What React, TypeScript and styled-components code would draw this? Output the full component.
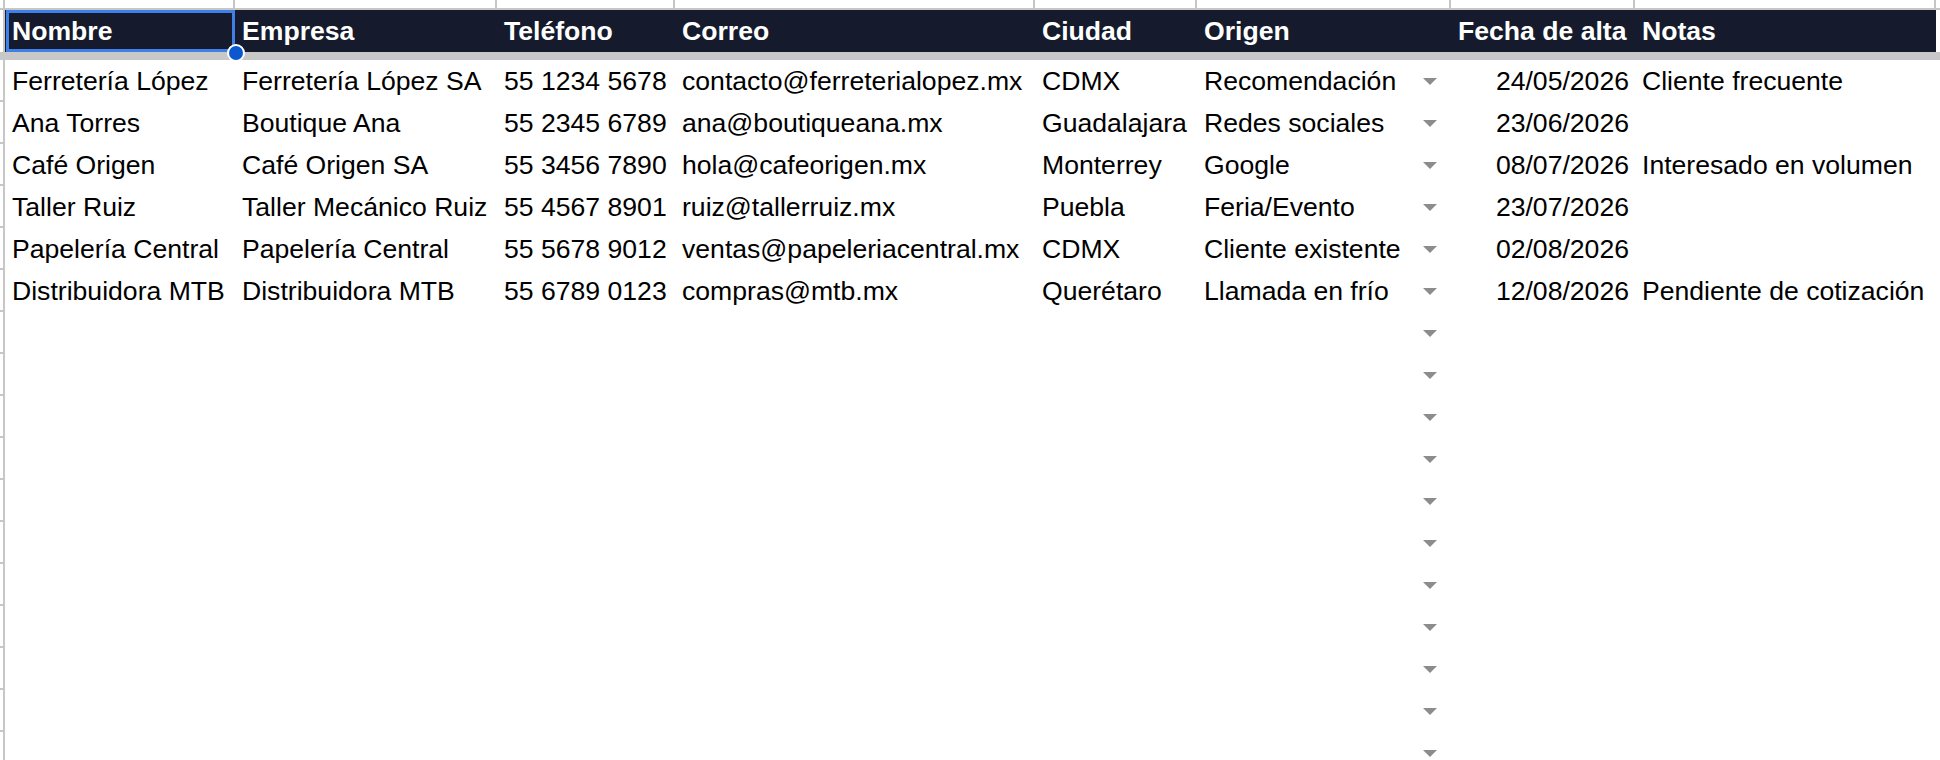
import React from "react";
import styled, { createGlobalStyle } from "styled-components";

const GlobalStyle = createGlobalStyle`
  html, body {
    margin: 0;
    padding: 0;
    background: #ffffff;
    overflow: hidden;
  }
  body {
    font-family: "Liberation Sans", Arial, sans-serif;
  }
`;

const COLS = "5px 230px 262px 178px 360px 162px 254px 184px 301px 1fr";
const LINE = "#c6c6c6";

const Sheet = styled.div`
  width: 1940px;
  height: 760px;
  overflow: hidden;
  display: flex;
  flex-direction: column;
  font-family: "Liberation Sans", Arial, sans-serif;
  font-size: 26.6px;
  color: #000;
`;

const GridRow = styled.div<{ $h: number }>`
  display: grid;
  grid-template-columns: ${COLS};
  height: ${(p) => p.$h}px;
  flex: none;
  position: relative;
`;

const RowHead = styled.div<{ $tick?: boolean }>`
  box-sizing: border-box;
  border-right: 2px solid ${LINE};
  border-bottom: ${(p) => (p.$tick ? `2px solid ${LINE}` : "none")};
  background: #fff;
`;

const StripCell = styled.div<{ $last?: boolean }>`
  box-sizing: border-box;
  border-bottom: 2px solid ${LINE};
  border-right: ${(p) => (p.$last ? "none" : `2px solid ${LINE}`)};
  background: #fff;
`;

const StripHead = styled(RowHead)`
  border-bottom: 2px solid ${LINE};
`;

const HeadCell = styled.div<{ $selected?: boolean }>`
  box-sizing: border-box;
  background: #151b2c;
  color: #ffffff;
  font-weight: 700;
  line-height: 42px;
  padding: 0 6px 0 7px;
  white-space: nowrap;
  position: relative;
  z-index: ${(p) => (p.$selected ? 3 : 0)};
  ${(p) =>
    p.$selected &&
    `
    &::after {
      content: "";
      position: absolute;
      left: 1px;
      top: 0;
      right: 0;
      bottom: 0;
      border: 3px solid #3f80e8;
      pointer-events: none;
    }
  `}
`;

const FillHandle = styled.span`
  position: absolute;
  right: -10px;
  bottom: -10px;
  width: 14px;
  height: 14px;
  border-radius: 50%;
  background: #0b57d0;
  border: 2px solid #ffffff;
  z-index: 4;
`;

const Blank = styled.div`
  background: #fff;
`;

const FrozenDivider = styled.div`
  height: 8px;
  flex: none;
  background: #c8c8c8;
`;

const Cell = styled.div<{ $align?: "left" | "right" }>`
  box-sizing: border-box;
  line-height: 42px;
  padding: 0 6px 0 7px;
  white-space: nowrap;
  text-align: ${(p) => p.$align ?? "left"};
  overflow: visible;
`;

const ChipCell = styled.div`
  box-sizing: border-box;
  display: flex;
  align-items: center;
  justify-content: space-between;
  line-height: 42px;
  padding: 0 14px 0 7px;
  white-space: nowrap;
`;

const Arrow = styled.svg`
  width: 14px;
  height: 7px;
  flex: none;
  display: block;
`;

const DropArrow = () => (
  <Arrow viewBox="0 0 14 7">
    <path d="M0 0 L14 0 L7 7 Z" fill="#8c8c8c" />
  </Arrow>
);

const headers = [
  "Nombre",
  "Empresa",
  "Teléfono",
  "Correo",
  "Ciudad",
  "Origen",
  "Fecha de alta",
  "Notas",
];

const data: string[][] = [
  ["Ferretería López", "Ferretería López SA", "55 1234 5678", "contacto@ferreterialopez.mx", "CDMX", "Recomendación", "24/05/2026", "Cliente frecuente"],
  ["Ana Torres", "Boutique Ana", "55 2345 6789", "ana@boutiqueana.mx", "Guadalajara", "Redes sociales", "23/06/2026", ""],
  ["Café Origen", "Café Origen SA", "55 3456 7890", "hola@cafeorigen.mx", "Monterrey", "Google", "08/07/2026", "Interesado en volumen"],
  ["Taller Ruiz", "Taller Mecánico Ruiz", "55 4567 8901", "ruiz@tallerruiz.mx", "Puebla", "Feria/Evento", "23/07/2026", ""],
  ["Papelería Central", "Papelería Central", "55 5678 9012", "ventas@papeleriacentral.mx", "CDMX", "Cliente existente", "02/08/2026", ""],
  ["Distribuidora MTB", "Distribuidora MTB", "55 6789 0123", "compras@mtb.mx", "Querétaro", "Llamada en frío", "12/08/2026", "Pendiente de cotización"],
];

const TOTAL_ROWS = 17;

export default function App() {
  const rows: string[][] = [];
  for (let i = 0; i < TOTAL_ROWS; i++) {
    rows.push(data[i] ?? ["", "", "", "", "", "", "", ""]);
  }
  return (
    <>
      <GlobalStyle />
      <Sheet>
        <GridRow $h={10}>
          <StripHead />
          {headers.map((h) => (
            <StripCell key={h} />
          ))}
          <StripCell $last />
        </GridRow>
        <GridRow $h={42}>
          <RowHead />
          {headers.map((h, i) => (
            <HeadCell key={h} $selected={i === 0}>
              {h}
              {i === 0 && <FillHandle />}
            </HeadCell>
          ))}
          <Blank />
        </GridRow>
        <FrozenDivider />
        {rows.map((r, ri) => (
          <GridRow $h={42} key={ri}>
            <RowHead $tick />
            <Cell>{r[0]}</Cell>
            <Cell>{r[1]}</Cell>
            <Cell>{r[2]}</Cell>
            <Cell>{r[3]}</Cell>
            <Cell>{r[4]}</Cell>
            <ChipCell>
              <span>{r[5]}</span>
              <DropArrow />
            </ChipCell>
            <Cell $align="right">{r[6]}</Cell>
            <Cell>{r[7]}</Cell>
            <Blank />
          </GridRow>
        ))}
      </Sheet>
    </>
  );
}
